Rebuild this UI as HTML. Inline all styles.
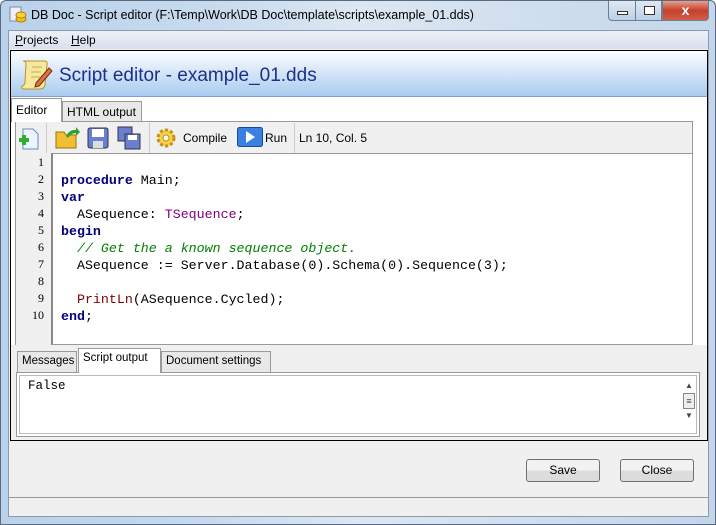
<!DOCTYPE html>
<html><head><style>
*{margin:0;padding:0;box-sizing:border-box}
body{width:716px;height:525px;overflow:hidden;font-family:"Liberation Sans",sans-serif;font-size:12px;background:#fff;position:relative}
.frame{position:absolute;left:0;top:0;width:716px;height:525px;background:linear-gradient(90deg,#b9d1ea 0%,#c8dbee 30%,#dce7f2 50%,#c3d6ea 100%);border:1px solid #5a6b80;border-radius:6px 6px 0 0}
.title{position:absolute;left:30px;top:7px;font-size:12.5px;color:#000}
.ctrl{position:absolute;top:0;height:20px;border:1px solid #6f7f93;border-top:none}
.client{position:absolute;left:8px;top:30px;width:701px;height:487px;background:#f0f0f0;border:1px solid #8a9bb0}
.menu{position:absolute;left:0;top:0;width:699px;height:18px;background:linear-gradient(#eef0f8,#d9dfee);font-size:12px}
.menu span{position:absolute;top:2px}
.inner{position:absolute;left:1px;top:19px;width:698px;height:391px;border:1px solid #000;background:#fff}
.hdr{position:absolute;left:0;top:0;width:696px;height:46px;background:linear-gradient(#fdfeff,#a9cbef);border-bottom:1px solid #7aa4d6}
.hdr .t{position:absolute;left:48px;top:14px;font-size:19px;color:#1d2f8e}
.tab{position:absolute;border:1px solid #999;border-bottom:none;background:#e8e8e8;font-size:12px;padding:3px 4px 0}
.tb{position:absolute;left:4px;top:70px;width:678px;height:33px;background:#f0f0f0;border:1px solid #999;border-bottom:none}
.gut{position:absolute;left:4px;top:102px;width:36px;height:192px;background:#f0f0f0;border-left:1px solid #999}
.gut div{height:17px;text-align:right;padding-right:7px;font-family:"Liberation Serif",serif;font-size:12px;line-height:17px}
.ed{position:absolute;left:40px;top:102px;width:642px;height:192px;border:1px solid #999;border-left:2px solid #888;background:#fff;font-family:"Liberation Mono",monospace;font-size:13.3px;padding-left:8px}
.ed div{height:17px;line-height:17px;white-space:pre}
.k{color:#00007f;font-weight:bold}.c{color:#008000;font-style:italic}.p{color:#800080}.f{color:#7f0000}
.btn{position:absolute;top:428px;width:74px;height:23px;border:1px solid #707070;border-radius:3px;background:linear-gradient(#f2f2f2 50%,#dcdcdc 50%);text-align:center;line-height:21px;font-size:12px}
</style></head><body>
<div class="frame">
<svg style="position:absolute;left:8px;top:5px" width="18" height="18"><rect x="1" y="1" width="11" height="14" fill="#eef" stroke="#889"/><ellipse cx="12" cy="13" rx="5" ry="3" fill="#f0c020" stroke="#b08000"/><ellipse cx="12" cy="9" rx="5" ry="3" fill="#f5d040" stroke="#b08000"/></svg>
<div class="title">DB Doc - Script editor (F:\Temp\Work\DB Doc\template\scripts\example_01.dds)</div>
<div class="ctrl" style="left:607px;width:28px;border-radius:0 0 0 4px;background:linear-gradient(#dfe8f3,#bccfe4)"><div style="position:absolute;left:8px;top:10px;width:11px;height:4px;border:1px solid #333;background:#fff"></div></div>
<div class="ctrl" style="left:634px;width:27px;background:linear-gradient(#dfe8f3,#bccfe4)"><div style="position:absolute;left:8px;top:5px;width:11px;height:9px;border:1px solid #333;background:#fff"></div></div>
<div class="ctrl" style="left:661px;width:47px;border-radius:0 0 4px 0;background:linear-gradient(#e8a090,#c5402a 50%,#d06048);color:#fff;font-weight:bold;text-align:center;font-size:14px;line-height:18px">x</div>
</div>
<div class="client">
<div class="menu"><span style="left:6px"><u>P</u>rojects</span><span style="left:62px"><u>H</u>elp</span></div>
<div class="inner">
<div class="hdr">
<svg style="position:absolute;left:9px;top:6px" width="34" height="34"><path d="M6 4 h18 q4 0 3 4 l-2 20 q-1 4 -5 4 h-16 q-3 0 -2-3 q3 -1 3 -4 l1 -18 q0-3 -3-3z" fill="#f7e8a0" stroke="#b8902a"/><path d="M12 10h10M11 15h10M11 20h9" stroke="#c8a850"/><path d="M16 26 l13 -15 l3 3 l-13 15 l-4 1z" fill="#e07040" stroke="#703010"/></svg>
<div class="t">Script editor - example_01.dds</div>
</div>
<div class="tab" style="left:0;top:47px;height:24px;background:#fff;width:51px;z-index:2;padding-top:4px">Editor</div>
<div class="tab" style="left:51px;top:50px;height:20px;width:80px">HTML output</div>
<div class="tb">
<svg style="position:absolute;left:2px;top:5px" width="24" height="24"><path d="M5 2h10l5 5v15H5z" fill="#eef4ff" stroke="#6a8ac0"/><rect x="1" y="11" width="10" height="4" fill="#30b030"/><rect x="4" y="8" width="4" height="10" fill="#30b030"/></svg>
<div style="position:absolute;left:30px;top:1px;width:1px;height:30px;background:#ccc"></div>
<svg style="position:absolute;left:38px;top:4px" width="26" height="24"><path d="M2 6h8l2 3h10v13H2z" fill="#f0c030" stroke="#a07010"/><path d="M12 10 q4-7 10-6 l0-3 4 5-4 4 0-3 q-5 0-8 5z" fill="#30a030"/></svg>
<svg style="position:absolute;left:71px;top:5px" width="22" height="22"><rect x="1" y="1" width="20" height="20" rx="2" fill="#6a7fd0" stroke="#334"/><rect x="5" y="2" width="12" height="8" fill="#fff"/><rect x="6" y="14" width="10" height="7" fill="#ddd"/></svg>
<svg style="position:absolute;left:101px;top:4px" width="24" height="24"><rect x="1" y="1" width="14" height="14" fill="#6a7fd0" stroke="#334"/><rect x="8" y="8" width="15" height="15" fill="#6a7fd0" stroke="#334"/><rect x="11" y="9" width="9" height="5" fill="#fff"/></svg>
<div style="position:absolute;left:133px;top:1px;width:1px;height:30px;background:#ccc"></div>
<svg style="position:absolute;left:139px;top:5px" width="22" height="22"><circle cx="11" cy="11" r="8" fill="#f8d040" stroke="#c09020" stroke-width="3" stroke-dasharray="3 2.2"/><circle cx="11" cy="11" r="3" fill="#fff" stroke="#c09020"/></svg>
<span style="position:absolute;left:167px;top:9px">Compile</span>
<svg style="position:absolute;left:221px;top:5px" width="26" height="20"><rect x="0.5" y="0.5" width="25" height="19" rx="2" fill="#3a80e0" stroke="#1a4a90"/><path d="M9 4l9 6-9 6z" fill="#fff"/></svg>
<span style="position:absolute;left:249px;top:9px">Run</span>
<div style="position:absolute;left:278px;top:1px;width:1px;height:30px;background:#ccc"></div>
<span style="position:absolute;left:283px;top:9px">Ln 10, Col. 5</span>
</div>
<div class="gut"><div style="margin-top:1px">1</div><div>2</div><div>3</div><div>4</div><div>5</div><div>6</div><div>7</div><div>8</div><div>9</div><div>10</div></div>
<div class="ed"><div style="margin-top:1px"> </div><div><span class="k">procedure</span> Main;</div><div><span class="k">var</span></div><div>  ASequence: <span class="p">TSequence</span>;</div><div><span class="k">begin</span></div><div>  <span class="c">// Get the a known sequence object.</span></div><div>  ASequence := Server.Database(0).Schema(0).Sequence(3);</div><div> </div><div>  <span class="f">PrintLn</span>(ASequence.Cycled);</div><div><span class="k">end</span>;</div></div>
<div style="position:absolute;left:0;top:294px;width:696px;height:95px;background:#f0f0f0"></div>
<div class="tab" style="left:6px;top:300px;height:21px;width:60px;font-size:11.5px">Messages</div>
<div class="tab" style="left:67px;top:297px;height:25px;width:83px;background:#fff;z-index:2;font-size:11.5px">Script output</div>
<div class="tab" style="left:150px;top:300px;height:21px;width:110px;font-size:11.5px">Document settings</div>
<div style="position:absolute;left:5px;top:321px;width:684px;height:65px;border:1px solid #999;background:#fff">
<div style="position:absolute;left:2px;top:2px;width:678px;height:59px;border:1px solid #bbb;font-family:'Liberation Mono',monospace;font-size:12.5px;padding:3px 8px">False</div>
<div style="position:absolute;right:4px;top:6px;width:12px;height:52px;color:#444;font-size:8px;text-align:center;line-height:14px">▲<div style="border:1px solid #888;height:16px;background:#eee;font-size:9px;line-height:14px">≡</div>▼</div>
</div>
</div>
<div class="btn" style="left:517px">Save</div>
<div class="btn" style="left:611px">Close</div>
<div style="position:absolute;left:0;top:466px;width:699px;height:1px;background:#999"></div>
</div>
</body></html>
